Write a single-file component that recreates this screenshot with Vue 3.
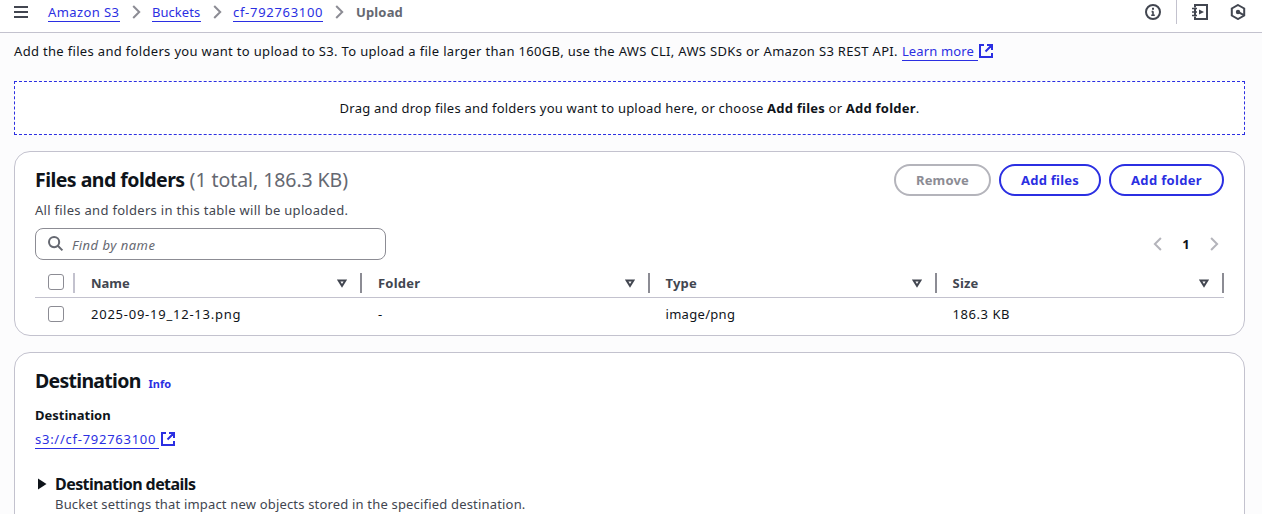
<script setup>
const crumbs = [
  { text: 'Amazon S3', cls: 'c-service' },
  { text: 'Buckets', cls: 'c-buckets' },
  { text: 'cf-792763100', cls: 'c-bucket' },
]
const columns = ['Name', 'Folder', 'Type', 'Size']
const cells = ['2025-09-19_12-13.png', '-', 'image/png', '186.3 KB']
</script>

<template>
  <div class="page">
    <header class="topbar">
      <svg class="menu" width="14" height="12" viewBox="0 0 14 12"><path d="M0 1h14M0 6h14M0 11h14" /></svg>
      <nav class="crumbs">
        <template v-for="c in crumbs" :key="c.text">
          <a :class="['crumb', c.cls]"><span>{{ c.text }}</span></a>
          <svg class="sep" width="9" height="14" viewBox="0 0 9 14"><path d="M1.2 1l6 6-6 6" /></svg>
        </template>
        <b class="current">Upload</b>
      </nav>
      <div class="tools">
        <svg width="16" height="16" viewBox="0 0 16 16"><circle cx="8" cy="8" r="7" /><path d="M8 7.2v4.6M6.6 7.6H8M6.2 11.3h3.6" class="thin" /><path d="M7 4.7h2" /></svg>
        <i class="rule"></i>
        <svg class="book" width="17" height="16" viewBox="0 0 17 16"><path d="M4 3.5V1h12v14H4v-2.5M4 4v8" /><path d="M1 4.5h5M1 8h5M1 11.5h5" class="thin" /><path d="M8 5.4v5.2l5-2.6z" class="solid" /></svg>
        <svg class="hex" width="16" height="16" viewBox="0 0 16 16"><path d="M8 1l6.2 3.5v7L8 15l-6.2-3.5v-7z" /><circle cx="8" cy="8" r="2.2" class="solid" /><path d="M8.5 8.2l5.3 3" /></svg>
      </div>
    </header>

    <main>
      <p class="intro"><span>Add the files and folders you want to upload to S3. To upload a file larger than 160GB, use the AWS CLI, AWS SDKs or Amazon S3 REST API.</span>
        <a class="learn">Learn more</a><svg class="ext" width="14" height="14" viewBox="0 0 14 14"><path d="M5 1H1v12h12V9M8 1h5v5M13 1L6.5 7.5" /></svg>
      </p>

      <div class="drop"><span>Drag and drop files and folders you want to upload here, or choose <b>Add files</b> or <b>Add folder</b>.</span></div>

      <section class="panel files">
        <div class="head">
          <h2><span class="title">Files and folders</span><span class="count">(1 total, 186.3 KB)</span></h2>
          <div class="buttons">
            <button class="remove" disabled>Remove</button>
            <button class="add-files">Add files</button>
            <button class="add-folder">Add folder</button>
          </div>
        </div>
        <p class="desc"><span>All files and folders in this table will be uploaded.</span></p>
        <div class="filter">
          <div class="search">
            <svg width="16" height="16" viewBox="0 0 16 16"><circle cx="6.1" cy="6.1" r="5.1" /><path d="M9.8 9.8l4.6 4.6" /></svg>
            <span>Find by name</span>
          </div>
          <div class="pager">
            <svg width="9" height="14" viewBox="0 0 9 14"><path d="M7.9 1l-6 6 6 6" /></svg>
            <b>1</b>
            <svg width="9" height="14" viewBox="0 0 9 14"><path d="M1.1 1l6 6-6 6" /></svg>
          </div>
        </div>
        <div class="row thead">
          <div class="check first"><i></i></div>
          <div v-for="c in columns" :key="c" class="cell">
            <b :class="'h-' + c.toLowerCase()">{{ c }}</b>
            <svg width="10" height="9" viewBox="0 0 10 9"><path d="M1.6 1.5h6.8L5 6.8z" /></svg>
          </div>
        </div>
        <div class="row tbody">
          <div class="check"><i></i></div>
          <div v-for="(c, i) in cells" :key="c" class="cell"><span :class="'v-' + i">{{ c }}</span></div>
        </div>
      </section>

      <section class="panel dest">
        <h2><span class="dtitle">Destination</span><a class="info">Info</a></h2>
        <div class="label"><span>Destination</span></div>
        <div class="uri"><a>s3://cf-792763100</a><svg class="ext" width="14" height="14" viewBox="0 0 14 14"><path d="M5 1H1v12h12V9M8 1h5v5M13 1L6.5 7.5" /></svg></div>
        <div class="details">
          <svg width="9" height="12" viewBox="0 0 9 12"><path d="M0 .5v11L8.5 6z" /></svg>
          <div>
            <h3><span>Destination details</span></h3>
            <p><span>Bucket settings that impact new objects stored in the specified destination.</span></p>
          </div>
        </div>
      </section>
    </main>
  </div>
</template>

<style>
body { margin: 0; overflow: hidden; background: #fcfcfd; }
</style>

<style scoped>
* { box-sizing: border-box; }
.page { height: 514px; overflow: hidden; font: 13px/20px "Noto Sans", sans-serif; color: #0f141a; }
h2, h3, p { margin: 0; }
svg { display: block; flex: none; fill: none; stroke: #424650; stroke-width: 2; }
a { color: #2b2fe2; }
.solid { fill: #424650; stroke: none; }
.thin { stroke-width: 1.6; }
.topbar { height: 33px; padding: 0 16px 8px 14px; display: flex; align-items: center; background: #fff; border-bottom: 1px solid #c3c2ce; }
.crumbs { display: flex; align-items: center; margin-left: 20px; }
.crumb { height: 19px; line-height: 19px; border-bottom: 1px solid #2b2fe2; white-space: nowrap; }
.c-service { width: 72px; letter-spacing: .4px; }
.c-buckets { width: 49px; letter-spacing: .05px; }
.c-bucket { width: 90px; letter-spacing: .7px; }
.sep { margin: 0 11px 0 12px; stroke: #8c8c94; }
.current { margin-left: 1px; color: #656871; letter-spacing: .15px; }
.tools { margin-left: auto; height: 24px; display: flex; align-items: center; }
.rule { width: 1px; height: 24px; margin: 0 15px; background: #c3c2ce; }
.book { margin-left: -1px; }
.hex { margin-left: 22px; }
main { padding: 8px 17px 0 14px; }
.intro { display: flex; height: 20px; white-space: nowrap; letter-spacing: .325px; }
.learn { margin-left: 4px; width: 76px; border-bottom: 1px solid #2b2fe2; letter-spacing: .15px; }
.ext { stroke: #2b2fe2; margin: 3px 0 0 1px; }
.drop { height: 54px; margin-top: 20px; border: 1px dashed #2b2fe2; background: #fff; display: flex; align-items: center; justify-content: center; white-space: nowrap; letter-spacing: .22px; }
.panel { border: 1px solid #c3c2ce; border-radius: 16px; background: #fff; margin-top: 16px; padding: 0 20px; }
.files { height: 185px; }
.head { display: flex; justify-content: space-between; padding-top: 12px; height: 48px; }
h2 { font-size: 19.5px; line-height: 24px; padding-top: 4px; white-space: nowrap; }
.title { letter-spacing: -.53px; }
.count { font-weight: 400; color: #656871; letter-spacing: -.07px; margin-left: 5px; }
.buttons { display: flex; gap: 8px; }
button { height: 32px; padding: 0; border: 2px solid #2b2fe2; border-radius: 20px; background: #fff; color: #2b2fe2; font: 700 13px/20px "Noto Sans", sans-serif; white-space: nowrap; }
.remove { width: 97px; color: #8c8c94; border-color: #b4b4bb; letter-spacing: .15px; }
.add-files { width: 102px; letter-spacing: .25px; }
.add-folder { width: 115px; letter-spacing: .33px; }
.desc { color: #424650; letter-spacing: .3px; }
.filter { display: flex; align-items: center; justify-content: space-between; height: 32px; margin-top: 8px; }
.search { width: 351px; height: 32px; border: 1px solid #8c8c94; border-radius: 8px; display: flex; align-items: center; padding-left: 12px; gap: 8px; color: #656871; font-style: italic; letter-spacing: .5px; }
.search svg { stroke: #656871; }
.search span { padding-top: 2px; }
.pager { display: flex; align-items: center; margin-right: 5px; }
.pager svg { stroke: #b4b4bb; }
.pager b { width: 48px; text-align: center; }
.row { display: grid; grid-template-columns: 40px 287px 287.5px 287px 287.5px; }
.thead { height: 38px; border-bottom: 1px solid #c3c2ce; color: #424650; letter-spacing: .22px; }
.h-name { letter-spacing: 0; }
.check { display: flex; align-items: flex-start; padding-left: 13px; }
.thead .check { margin: 13px 0 6px; padding-top: 1px; border-right: 2px solid #c3c2ce; }
.check i { width: 16px; height: 16px; border: 1px solid #8c8c94; border-radius: 3px; }
.thead .cell { display: flex; align-items: center; justify-content: space-between; margin: 13px 0 6px; border-right: 2px solid #8c8c94; padding: 0 13px 0 16px; }
.tbody { height: 34px; }
.tbody .check { padding-top: 8px; }
.tbody .cell { padding: 6px 0 0 16px; white-space: nowrap; }
.v-0 { letter-spacing: .76px; }
.v-2 { letter-spacing: .3px; }
.v-3 { letter-spacing: .55px; }
.dest { height: 200px; padding-top: 12px; }
.dest h2 { display: flex; align-items: baseline; }
.dtitle { letter-spacing: -.72px; }
.info { font-size: 11px; margin-left: 8px; }
.label { font-weight: 700; margin-top: 9px; margin-bottom: 4px; height: 20px; }
.uri { display: flex; }
.uri a { width: 124px; border-bottom: 1px solid #2b2fe2; height: 20px; white-space: nowrap; letter-spacing: .74px; }
.uri .ext { margin-left: 2px; }
.details { display: flex; margin-top: 25px; }
.details svg { fill: #0f141a; stroke: none; margin: 4px 8px 0 3px; }
h3 { font-size: 16px; line-height: 20px; letter-spacing: -.56px; }
.details p { color: #424650; line-height: 20px; letter-spacing: .18px; }
</style>
